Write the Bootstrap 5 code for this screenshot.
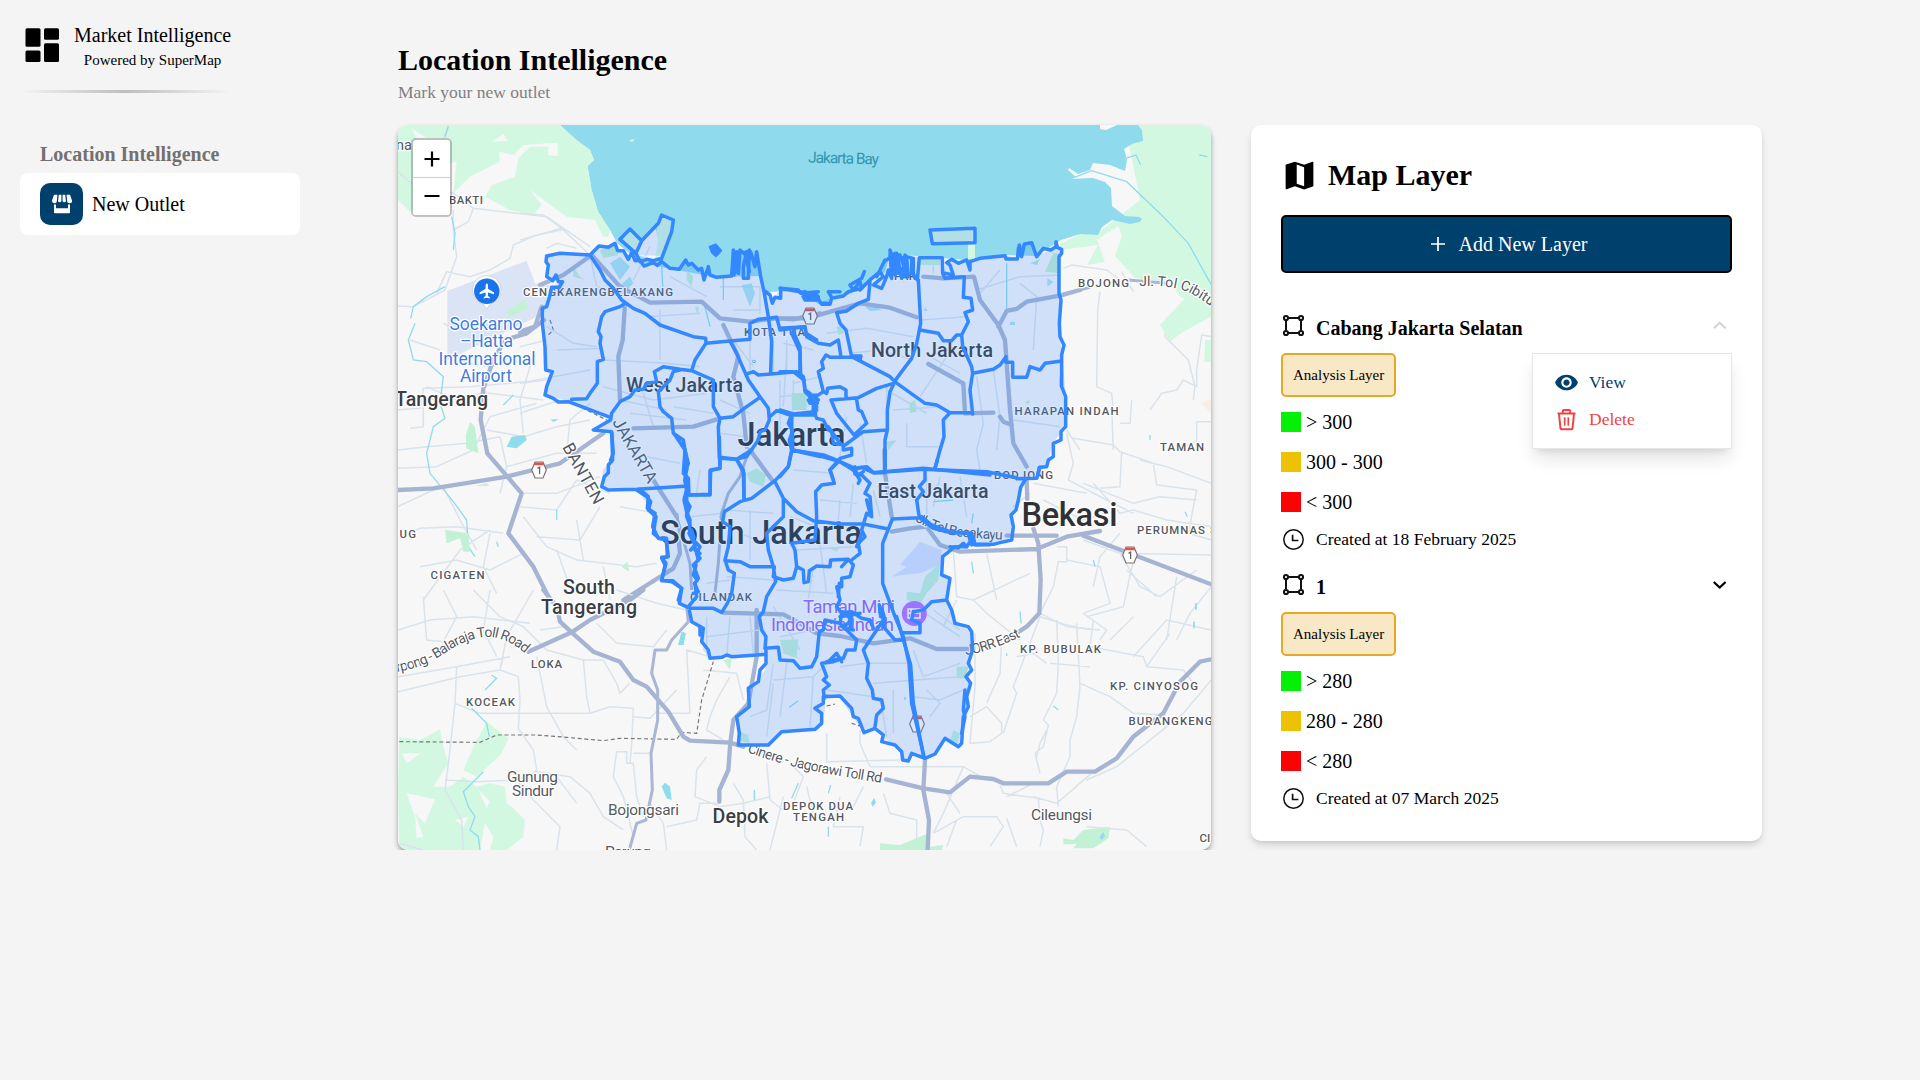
<!DOCTYPE html>
<html lang="en">
<head>
<meta charset="utf-8">
<meta name="viewport" content="width=device-width, initial-scale=1">
<title>Market Intelligence</title>
<link href="https://cdn.jsdelivr.net/npm/bootstrap@5.3.0/dist/css/bootstrap.min.css" rel="stylesheet">
<style>
  body { background: #f4f4f4; color: #000; font-family: "Liberation Serif", "Times New Roman", serif; font-size: 20px; line-height: 30px; overflow: hidden; }
  svg { display: block; flex: none; }
  .side { width: 320px; padding: 20px; flex: none; }
  .brand { gap: 9px; }
  .brand-sub { font-size: 15px; line-height: 20px; }
  .divider { width: 211px; height: 3px; margin-top: 20px; background: linear-gradient(90deg, transparent, #bdbdbd, transparent); }
  .side-title { color: #757070; font-weight: 700; margin: 46px 0 4px; padding-left: 20px; }
  .side-link { height: 62px; padding: 10px 20px; border-radius: 8px; color: #000; gap: 9px; }
  .side-icon { width: 43px; height: 42px; border-radius: 10px; background: #00406d; }
  .content { padding: 42px 0 0 78px; }
  .page-title { font-size: 30px; line-height: 36px; font-weight: 700; margin: 0 0 2px; }
  .page-sub { font-size: 17.5px; line-height: 25px; color: #808080; margin: 0 0 20px; }
  .panels { gap: 40px; }
  .map-box { width: 813px; height: 725px; border-radius: 10px; box-shadow: 0 5px 7px -1px rgba(0,0,0,.25), 0 2px 5px -1px rgba(0,0,0,.3); }
  .zoom-ctl { left: 13px; top: 13px; width: 41px; border: 2px solid rgba(0,0,0,.22); border-radius: 5px; background-clip: padding-box; }
  .zoom-ctl button { width: 37px; height: 37px; background: #fff; border: 0; padding: 0; }
  .zoom-ctl button + button { height: 38px; border-top: 1px solid #ccc; }
  .layer-card { width: 511px; border-radius: 10px; padding: 30px; box-shadow: 0 5px 8px -1px rgba(0,0,0,.13), 0 2px 5px -2px rgba(0,0,0,.13); }
  .layer-title { font-size: 30px; line-height: 40px; font-weight: 700; margin: 0 0 20px; gap: 10px; }
  .add-btn { height: 58px; background: #00406d; border: 2px solid #000; border-radius: 5px; color: #fff; font-size: 20px; margin-bottom: 40px; gap: 9px; padding: 0; }
  .add-btn:hover { background: #00406d; color: #fff; border-color: #000; }
  .layer-item + .layer-item { margin-top: 20px; }
  .layer-head { height: 30px; margin-bottom: 10px; gap: 10px; font-weight: 700; line-height: 31px; }
  .tag { display: inline-block; height: 44px; border: 2px solid #e6a926; border-radius: 5px; background: #f9e8c5; padding: 0 10px; font-size: 15px; line-height: 40px; vertical-align: top; }
  .legend { margin: 10px 0; gap: 10px; line-height: 31px; }
  .legend > div { gap: 5px; height: 30px; }
  .swatch { width: 20px; height: 20px; }
  .hi { background: #04f004; } .mid { background: #edc204; } .lo { background: #f80404; }
  .stamp { font-size: 17.5px; line-height: 25px; gap: 10px; }
  .menu-box { top: 40px; right: 0; width: 200px; height: 96px; padding: 16px 21px; background: #fff; border: 1px solid #e5e7eb; box-shadow: 0 12px 18px -3px rgba(0,0,0,.12), 0 5px 7px -4px rgba(0,0,0,.1); font-size: 17.5px; line-height: 25px; gap: 12px; }
  .menu-box a { gap: 10px; text-decoration: none; }
  .view { color: #00406d; } .del { color: #ef4444; }

  /* map symbols */
  #map text { font-family: Roboto, "Open Sans", sans-serif; fill: #55585e; stroke: #fff; stroke-width: 2.4px; stroke-linejoin: round; paint-order: stroke; }
  #map .dist { font-size: 11.4px; font-weight: 500; }
  #map .town { font-size: 15.5px; }
  #map .city { font-size: 19.6px; font-weight: 500; fill: #3c3e42; }
  #map .big { font-size: 32.5px; font-weight: 500; fill: #2f3135; }
  #map .rd { font-size: 14px; }
  #map .air { font-size: 17.5px; fill: #3f7ddb; }
  #map .poi { font-size: 18.5px; fill: #9a62f0; }
  .sea { fill: #90daee; } .park { fill: #d3f8e2; } .park2 { fill: #c3f1d5; } .pond { fill: #8fdcec; }
  .minor { fill: none; stroke: #d9e3ec; stroke-width: 4.5; stroke-linejoin: round; }
  .major { fill: none; stroke: #a5b4d3; stroke-width: 13; stroke-linejoin: round; stroke-linecap: round; }
  .mid-rd { fill: none; stroke: #a9b7d4; stroke-width: 9; stroke-linejoin: round; }
  .creek { fill: none; stroke: #8fdcec; stroke-width: 4; }
  .limit { fill: none; stroke: #777; stroke-width: 3.5; stroke-dasharray: 12 8; }
  .zone { fill: #3388ff; fill-opacity: .2; }
  .edge { fill: none; stroke: #3388ff; stroke-width: 10.5; stroke-linejoin: round; stroke-linecap: round; }
</style>
<script src="https://cdn.jsdelivr.net/npm/bootstrap@5.3.0/dist/js/bootstrap.bundle.min.js"></script>
</head>
<body>
<svg width="0" height="0" class="position-absolute">
  <defs>
    <symbol id="i-poly" viewBox="0 0 25 25"><g fill="none" stroke="#111" stroke-width="2"><path d="M7.5 5h10M7.5 20h10M5 7.5v10M20 7.5v10"/><circle cx="5" cy="5" r="2.1"/><circle cx="20" cy="5" r="2.1"/><circle cx="5" cy="20" r="2.1"/><circle cx="20" cy="20" r="2.1"/></g></symbol>
    <symbol id="i-clock" viewBox="0 0 25 25"><circle cx="12.5" cy="12.5" r="9.7" fill="none" stroke="#111" stroke-width="1.5"/><path d="M11.6 7.8v5.7h5.8" fill="none" stroke="#111" stroke-width="1.7"/></symbol>
    <symbol id="i-shield" viewBox="-8 -9 16 18"><path d="M-4 -8H4L7.3 0 4 8H-4L-7.3 0Z" fill="#fff" stroke="#80736f" stroke-width="1.2"/><path d="M-4 -7.4H4L5 -4.8H-5Z" fill="#e0524c"/><path d="M-1.5 -1.6 .6 -2.8V4" fill="none" stroke="#666" stroke-width="1.3"/></symbol>
  </defs>
</svg>

<div class="d-flex">
  <aside class="side">
    <div class="brand d-flex align-items-center">
      <svg width="45" height="45" viewBox="0 0 45 45"><g fill="#000"><rect x="5.5" y="5.2" width="15" height="18.6" rx="1.5"/><rect x="5.5" y="27.5" width="15" height="11.5" rx="1.5"/><rect x="24" y="5.2" width="15" height="11.5" rx="1.5"/><rect x="24" y="20.3" width="15" height="18.7" rx="1.5"/></g></svg>
      <div class="text-center"><div>Market Intelligence</div><div class="brand-sub">Powered by SuperMap</div></div>
    </div>
    <div class="divider"></div>
    <div class="side-title">Location Intelligence</div>
    <a class="side-link d-flex align-items-center bg-white text-decoration-none" href="#">
      <span class="side-icon d-flex align-items-center justify-content-center">
        <svg width="22" height="20" viewBox="0 0 22 20"><g fill="#fff"><path d="M3 .8H6.4L5.900 6.600a2.500 2.500 0 0 1-5 .2ZM7.800.8h2.600v6.500a1.900 1.900 0 0 1-3.400 0ZM11.600.8h2.600l.8 6.500a1.900 1.900 0 0 1-3.400 0ZM15.600.8H19l2.100 6a2.500 2.500 0 0 1-5 0Z"/><path d="M3 10.500h2v3.700h12v-3.700h2v7.800a1 1 0 0 1-1 1H4a1 1 0 0 1-1-1Z"/></g></svg>
      </span>
      <span>New Outlet</span>
    </a>
  </aside>

  <main class="content">
    <h1 class="page-title">Location Intelligence</h1>
    <p class="page-sub">Mark your new outlet</p>
    <div class="panels d-flex align-items-start">
      <section class="map-box position-relative overflow-hidden">
        <svg id="map" width="813" height="725" viewBox="398 125 813 725">
          <rect x="398" y="125" width="813" height="725" fill="#f7f7f7"/>
          <!-- sea and coast -->
          <path class="park" d="M1060 244L1080 234 1098 233 1112 222 1140 200 1125 125H1212V315L1210 318 1180 296 1170 282 1135 278 1115 256 1122 236 1118 226 1097 240 1105 262 1087 265 1098 245 1060 250Z"/>
          <path class="sea" d="M560 125L576 140 590 150 594 160 587.500 166 591.500 190 598 212 610 230 617 243 640 262 670 269 716 277 760 276 765 292 800 291 818 304 850 294 885 272 890 254 942 258 966 260 1005 255 1036 256 1061 240 1080 234 1098 235 1102 227 1112 220 1130 224 1140 222 1142 219 1139 217 1125 216 1112 206 1111 188 1105 182 1093 178 1071 179 1076 177 1068 170 1069 168 1078 174 1090 170 1093 163 1110 165 1125 171 1127 160 1124 149 1132 144 1143 141 1142 130 1138 125 1117 125 1106 130 1100 129 1100 125Z"/>
          <path class="park" d="M968 244h7v15h-7ZM629 140l6-1-3 3Z"/>
          <path fill="#d3f6e0" d="M620 238L630 229 641 241 635 254ZM657 222L662 215 673 221 664 256 655 258ZM930 229L974 228V242L931 244Z"/>
          <path fill="#f7f7f7" d="M637 255L641 241 655 226 658 240 655 260Z"/>
          <!-- north-west sheet -->
          <g transform="translate(390 30) scale(.33333)">
            <path class="park" d="M24 285H510L560 330 600 360 612 390 593 408 605 480 625 545 660 600 655 620 640 620 615 570 530 560 420 480 455 525 430 555 360 540 285 500 305 465 375 440 385 385 420 350 475 350 475 375 503 378 503 338 400 345 370 375 328 365 330 395 240 440 190 490 200 395 180 400V325H80L110 325 65 295 80 325V530L60 545 24 510Z"/>
            <path fill="#f7f7f7" d="M305 335L340 312 353 333Z"/>
            <path fill="#dbe4f5" d="M172 783L410 692 435 760 480 765 462 850 172 990Z"/>
            <path class="park2" d="M345 845L405 808 415 835 360 860Z"/>
            <path class="minor" d="M24 425L70 465 190 490 250 535 470 560 600 650M250 535L235 575 190 600M515 600L440 615 370 645 360 685 300 720 240 740 170 725 140 790M190 540V600L200 680 165 780 70 830 24 828M470 655L500 640 560 655M175 285L160 325"/>
            <path class="creek" d="M175 290L165 320M185 560L195 610 190 660M165 770L110 800 70 830 62 865"/>
          </g>
          <!-- north-east sheet -->
          <g transform="translate(800 110) scale(.33333)">
            <path class="creek" d="M815 205L875 182 980 215 1090 320 1165 400 1234 525M975 145L1008 135 1022 165M1198 135L1222 140"/>
            <path class="minor" d="M790 475L815 465 920 480 1000 540M900 545L893 600 890 830 935 850 940 900M1234 590L1150 590 1100 625 1095 680 1165 750 1185 830 1180 870M1234 680L1205 675 1190 780 1190 830 1150 810 1130 840 1085 850 1050 900M1000 545L965 485"/>
            <path class="park" d="M1080 645L1160 560 1230 590 1234 620 1150 665 1110 695ZM1215 690H1234V755H1213Z"/>
            <path class="mid-rd" d="M780 555L870 532M985 510L1100 520"/>
          </g>
          <!-- west sheet -->
          <g transform="translate(390 320) scale(.33333)">
            <path class="minor" d="M24 270L90 265 100 205 240 200 410 185 600 150M60 325L100 320V240L190 230 300 220 460 240M24 390L110 380 230 370 330 350M24 445L140 440 250 390 300 290 440 250M110 200L200 240 290 215M400 340L390 240 435 90M290 330L400 350 500 320 600 300M330 350L350 440 330 520M350 440L500 400 620 400M400 520L500 520 630 470M530 400L540 300 600 250M390 560L500 570 560 480 660 520M440 650L570 660 630 560M400 590L470 680 560 720 740 740 800 730M500 690L540 800M24 650L90 625 200 620 340 640M90 740L200 720 300 750 400 700M100 840L210 690 300 630M300 640L280 740 320 820M560 600L580 720M640 740L660 840M690 560L800 580M24 560L130 510M160 500L210 600 260 690"/>
            <path class="minor" stroke="#c2d2ea" d="M160 10L250 60 350 50M180 120L300 140 400 120M150 90L60 60"/>
            <path class="creek" d="M75 10L55 60 70 120 110 125 160 170 150 250 165 295 130 320 110 400 120 460 190 545 230 600 235 680 255 710M340 255L370 225M500 570V600M320 665L325 680"/>
            <path class="pond" d="M350 380L365 350 405 345 410 360 380 385ZM482 298H506L490 306Z"/>
            <path class="park2" d="M228 345L240 305 255 320 265 400 228 385ZM165 630L235 640 240 695 220 695 210 655 170 670ZM695 740L712 725 718 755ZM255 498L290 490 298 498Z"/>
            <path class="limit" d="M480 0L490 30 470 50M540 245L650 300"/>
            <path class="major" d="M24 510L130 505 350 470 510 430 640 340M280 205L272 300 292 400 395 520 355 640 430 740 480 840M282 200L310 120 345 60 410 40 462 0M700 840L850 745 870 700 865 650"/>
          </g>
          <!-- east sheet -->
          <g transform="translate(800 400) scale(.33333)">
            <path class="minor" d="M800 100L820 190 805 240 920 300 1000 340M820 115L940 135 960 155 1060 190M935 20L940 150M965 155L960 260 900 265M960 70L990 70 995 0M1060 190L1070 255 1190 270 1165 400 1234 420M1020 180L1100 200 1234 250M1190 135V65H1234M850 250L1000 310 1080 290 1190 300M880 250L960 340 1000 330 1100 360 1234 380M700 250L860 280M730 300L850 360 920 340M460 450L470 590 520 600 690 520M520 600L560 640 660 720M470 600L430 680M770 440H800V485H775L760 560 720 640 800 680 900 690M850 420L960 460 1234 465M800 480L900 500 930 610 850 640 920 690 900 720M960 460L1020 560 1080 590 1190 510M980 510L1070 590M1130 530L1100 720M1234 560L1170 640 1130 720M690 280L640 320M960 400L900 470 880 560M1000 480L970 620 860 650M560 460L590 600"/>
            <path class="creek" d="M515 485L520 520M660 635L663 670M1050 105V120M1155 335L1162 350M880 480L885 500M1188 610V630M1182 665V685"/>
            <path opacity=".5" fill="#f8e8d0" d="M1205 10L1225 0H1234V40Z"/>
            <path class="major" d="M275 395L330 385 380 380 420 435 480 455 710 447 800 410 900 393M620 407H770M850 407L1234 553M680 240L682 300M700 385L715 430 722 540 718 640 680 680 640 705"/>
          </g>
          <!-- south-west sheet -->
          <g transform="translate(390 590) scale(.33333)">
            <path class="park" d="M28 440L90 450 150 418 160 470 175 520 130 590 180 590 220 560 260 590 300 580 345 590 350 640 370 655 405 690 400 740 350 780H28L24 600ZM220 540L250 470 290 395 355 445 335 490 315 510 260 560Z"/>
            <path fill="#f7f7f7" d="M35 490H92L50 520ZM50 610L135 628 105 700 75 670 100 740 80 745 75 680ZM265 598L300 635 290 655ZM285 700L310 740 300 780H270ZM195 690L235 680 220 710Z"/>
            <path class="minor" d="M24 120L120 90 250 80 420 100M100 20L110 150 160 155 200 80 160 0M250 0L330 80 400 110 470 180 580 210 640 210M24 260L200 230 360 200M24 305L130 280 210 260 330 240 350 140 430 0M340 200L330 240 385 260 390 330 385 415 430 480 440 540 400 580M200 230L195 340 180 480 165 600 215 690 220 780M195 340L270 370 600 370 660 350 730 355M440 200L470 350 520 440 560 480M580 210L590 320 600 370M300 0L280 120 320 200M165 570L260 575 380 570 440 545 540 560 600 610 640 680 700 720M640 210L680 280 690 310 720 280M500 560L560 640M380 570L430 630 510 710 500 780M730 355L725 460 720 520M730 490H780M800 370L900 370 890 180 960 200M680 485H710V520H730L740 620 760 680M680 485L670 560 700 620 730 740M780 640L820 700 830 780M830 710L920 690 930 640 990 640M950 500L920 540 915 620 990 650 1060 640 1140 620M1030 580L1060 630 1065 740 1100 780M1130 520L1140 630 1180 660M960 380L950 420 1000 450M940 240L1040 250 1060 330M1020 260L980 330 960 380M450 120L520 110M620 100L680 160 790 170 830 120M680 0L800 40 890 60M24 760L100 780"/>
            <path class="minor" d="M730 380L780 385 860 300M1180 620L1160 700 1140 780M1200 520L1240 560 1210 640"/>
            <path class="creek" d="M285 300L320 265 305 255M245 355L290 400 298 440M280 545L220 605 235 650 255 680 240 720 265 740 270 780M1225 580L1205 625M1093 600V630"/>
            <path class="pond" d="M865 165L875 125 887 130 880 165ZM815 590L825 578 840 590 845 630 830 625Z"/>
            <path class="park2" d="M1000 210L1025 205 1020 240Z"/>
            <path class="limit" d="M28 455L270 457 320 435 440 435 530 442 640 452 690 445 860 448 875 427 920 430 935 330 970 215"/>
            <path class="major" d="M460 0L500 50 510 95 545 127 610 185 690 215 730 270 770 290 835 365 880 440 900 452 1020 458 1060 470M415 185L545 127 600 90 720 30 760 0M1020 470L1015 540 988 600 988 635M1100 60V200L1075 340 1030 390 1020 465"/>
            <path class="mid-rd" d="M890 50L895 95 845 150 830 180 795 180 785 250 803 300 803 390 783 490 787 600 768 690 740 700 718 780"/>
          </g>
          <!-- south-east sheet -->
          <g transform="translate(800 600) scale(.33333)">
            <path class="minor" d="M80 400V485L300 480M180 390V430L210 500 360 500 490 500 560 540M490 500L430 640 400 700M525 100V260L510 430 570 425 605 400V370L560 320 510 350M605 120L600 220 560 310M720 50L640 260 650 280 610 400M770 60L775 190 770 280 730 360M720 50L800 75 880 90M830 70L840 260 830 350 810 420V470L770 560 775 620M840 250L930 290 1000 340 1090 345M650 170L700 160 740 190M750 190L870 200M880 60L870 140 1030 170 1040 200 1150 210 1180 250M730 360L745 375 730 440 705 460 720 520M740 390L720 430 710 470M880 515L770 610 700 590M600 555L610 580 715 595 720 660 730 690 720 740M400 700L490 650 590 650 610 680 570 740M440 580L480 640M690 555L620 590M860 680L980 690 1040 740M1234 240L1150 340 950 500 860 540M1000 170L1100 60 1234 90M930 120L1000 50M250 580L270 640 350 660V720M120 590L100 680 190 680 180 740M190 560L160 620 120 640M20 560L40 640M470 660L440 740M1040 200L1110 100M620 655L650 740"/>
            <path class="creek" d="M92 555L85 580M85 680V710M760 318L775 330M1188 10V28M1182 65V85M620 160V168"/>
            <path class="pond" d="M213 610L222 593 228 608 218 620Z"/>
            <path class="park2" d="M240 730L300 735 380 702V750H240ZM388 740L430 735 425 750H388ZM790 715L820 720 850 690 930 680 925 715 880 745H820L830 732 790 733Z"/><path class="pond" d="M898 710L910 697 916 708 905 720Z"/>
            <path class="limit" stroke="#555" d="M75 285L130 290M80 318L105 312M155 370L180 378"/>
            <path class="major" d="M258 538L370 565 450 577 510 530 580 537 610 550 745 550 800 515 885 515 950 475 1000 410 1090 340 1140 245 1200 185 1234 178M375 480L370 570 387 660 383 750"/>
          </g>
          <!-- city interior -->
          <g transform="translate(520 200) scale(.33333)">
            <path class="minor" d="M80 380L160 430 230 440M110 450L250 445M420 330V480M250 480L440 490 540 500M250 560L400 600 560 580M370 580L400 680M460 620L580 640M640 420L700 500M690 400V510M760 400V520M800 420V520M640 330L720 330M650 450L640 560M330 640L500 660M300 600L440 630M380 350L540 340M600 260H720V340M0 40L70 45 125 85 210 165M125 85L0 120M210 165L230 260 300 280M340 240L390 140M450 230L560 290M600 600L690 640M600 700L750 720M0 440L80 420M0 550L80 540M780 540V740M820 540V740M0 640L120 600"/>
            <path class="pond" opacity=".7" d="M270 190L300 170 330 200 300 240ZM665 255L695 250 705 280 690 320ZM285 270L330 230 340 250 300 290Z"/>
            <path class="park2" d="M160 200L180 230 195 240 160 230ZM500 210L520 230 515 260 500 240ZM820 580H855V625H818ZM525 320L537 320 533 345ZM240 150L285 135 295 165 250 175Z"/>
            <path class="creek" d="M425 200L430 290M610 230V300M555 320L570 380"/>
            <path class="major" d="M60 255L130 225 215 165 300 260 390 308 545 305 600 355 690 365 770 355 820 358 900 340M315 310L308 420 295 470 300 600M340 685L520 680 600 655M0 395L45 380 65 320M610 375L655 470 640 530 670 640 680 740"/>
          </g>
          <g transform="translate(780 210) scale(.33333)">
            <path class="minor" d="M140 370L260 355 400 380M210 430L300 420 400 450M320 530V680M420 330L560 320M590 240L720 200 840 195M660 180L600 250M720 220L770 260 760 420M500 440L420 560M540 490L450 440M340 600L480 590M380 640V710H480M590 500L610 640 590 720 600 780M640 480L660 620 650 720M700 630L840 650M10 400L100 420M40 520L120 500M0 560L100 550M200 620L180 740M240 640L260 760M460 150V190M320 540L440 610M20 430L10 590M860 660L900 720"/>
            <path class="pond" opacity=".7" d="M255 290L285 285 303 300 270 303ZM750 160L780 148 770 165ZM802 205L820 215 802 230ZM690 335H705V345H690ZM435 290L443 303H432Z"/>
            <path class="park2" d="M388 580L405 570 410 605 390 610ZM320 695L350 690 325 720ZM170 350L185 345 190 370 175 375ZM35 550H80V600H35ZM735 575L750 570 745 585ZM820 130L837 130V190L795 185ZM415 150H480V165H415Z"/>
            <path class="creek" d="M680 160V300M840 500V530"/>
            <path class="major" d="M0 325L80 325 240 280 330 293 410 322M430 200L490 205 582 200 600 270 655 345 675 390 690 600 700 700 740 770M655 350L680 303 710 297 740 275 840 257 900 240M445 462L550 520 555 610 640 608M660 620L670 635 695 645"/>
          </g>
          <g transform="translate(640 450) scale(.33333)">
            <path class="minor" d="M20 20L120 40M150 200L250 190M180 60L170 130M260 180L400 190M300 250L380 280M330 180V330M260 380L400 390M200 400L270 390M200 500V620M270 500L260 620M330 500L340 610M200 560L360 540M460 60L580 70M540 150L650 160M450 200L530 230M470 300L640 290M410 420L580 430M520 350L500 480M400 470L480 600M420 560L520 540M400 640L380 780 330 800M400 690L520 680 560 640M400 700L380 860M440 640L420 800M520 680L510 830M600 650L680 640M560 720L700 740M640 500L740 520M680 640L800 640M700 700L960 680M820 600L850 680 960 640M820 740L900 750 970 720M860 720L900 760 870 800M720 740L740 860M760 720V850M840 480L960 560M880 480L960 540M700 120L720 200M820 150L900 100M860 80V200M900 80L880 170M960 80L980 200M600 150L590 270M640 100L630 200M540 280L560 430"/>
            <path fill="#dae2fa" d="M755 380L800 350 780 345 840 275 905 300 900 345 840 370 790 375Z"/>
            <path fill="#c4f1d8" d="M800 450V425L840 430 855 380 900 340 895 390 860 430 840 465ZM320 70L350 55 378 75 370 110 330 95ZM420 570L475 568 470 625 430 610ZM950 650H985V685H950ZM565 293L600 290 590 305ZM295 870L300 845 325 855 328 880ZM930 870L940 840 960 850 950 885Z"/>
            <path class="creek" d="M448 772L475 752M1000 190L995 220M795 740V750M880 155L940 150" stroke-width="7"/>
            <path class="pond" d="M115 585L125 545 137 550 130 585Z"/>
            <path class="major" d="M250 488L430 493 480 520 530 550 600 558 700 580 810 565 890 597 1000 597M733 0L735 70 755 200M330 0L400 95M40 90L110 200M250 180L245 200"/>
            <path class="mid-rd" d="M110 190L120 260M110 200L150 340 155 420M320 20L300 80 265 130 245 190 235 340 225 430"/>
          </g>

          <!-- labels -->
          <g>
            <text x="396" y="150" font-size="14.500">na</text>
            <text class="dist" x="449" y="204" textLength="34">BAKTI</text>
            <text class="dist" x="523" y="296.300" textLength="150">CENGKARENGBELAKANG</text>
            <text class="air" x="449.500" y="330" textLength="73">Soekarno</text>
            <text class="air" x="460" y="347" textLength="53">–Hatta</text>
            <text class="air" x="438.500" y="364.500" textLength="97">International</text>
            <text class="air" x="460" y="382" textLength="52">Airport</text>
            <text class="city" x="395" y="406" textLength="93" font-weight="400">Tangerang</text>
            <text class="dist" x="391" y="538" textLength="25">BUG</text>
            <text class="dist" x="430.500" y="579" textLength="54">CIGATEN</text>
            <text class="city" x="563" y="594" textLength="52">South</text>
            <text class="city" x="541" y="614" textLength="96">Tangerang</text>
            <text class="dist" x="531" y="668" textLength="31">LOKA</text>
            <text class="dist" x="466" y="706" textLength="49">KOCEAK</text>
            <text class="town" x="507" y="781.700" textLength="51">Gunung</text>
            <text class="town" x="512" y="796.300" textLength="42">Sindur</text>
            <text class="town" x="608" y="815.300" textLength="71">Bojongsari</text>
            <text class="city" x="712.500" y="822.700" textLength="56">Depok</text>
            <text class="town" x="605" y="857" textLength="46">Parung</text>
            <text class="dist" x="783" y="810" textLength="70">DEPOK DUA</text>
            <text class="dist" x="793" y="821.300" textLength="51">TENGAH</text>
            <text class="town" x="1031" y="820" textLength="61">Cileungsi</text>
            <text class="dist" x="1199.500" y="841.500">CI</text>
            <text class="dist" x="1128.500" y="725" textLength="84">BURANGKENG</text>
            <text class="dist" x="1110" y="690" textLength="88">KP. CINYOSOG</text>
            <text class="dist" x="1020" y="653" textLength="81">KP. BUBULAK</text>
            <text class="poi" x="803" y="613" textLength="92">Taman Mini</text>
            <text class="poi" x="771" y="631" textLength="123">Indonesia Indah</text>
            <text class="dist" x="690" y="601" textLength="62">CILANDAK</text>
            <text class="big" x="660" y="543.500" textLength="202">South Jakarta</text>
            <text class="big" x="737.500" y="446" textLength="108">Jakarta</text>
            <text class="city" x="626" y="391.700" textLength="117">West Jakarta</text>
            <text class="city" x="871" y="357" textLength="122">North Jakarta</text>
            <text class="city" x="877.500" y="497.700" textLength="111">East Jakarta</text>
            <text class="big" x="1021.500" y="526" textLength="96">Bekasi</text>
            <text class="dist" x="744" y="336.300" textLength="61">KOTA TUA</text>
            <text class="dist" x="894" y="280" textLength="22">PAR</text>
            <text class="dist" x="1014.500" y="415" textLength="104">HARAPAN INDAH</text>
            <text class="dist" x="994" y="479" textLength="59">BODJONG</text>
            <text class="dist" x="1160" y="451.300" textLength="44">TAMAN</text>
            <text class="dist" x="1137" y="534" textLength="68">PERUMNAS</text><text class="dist" x="1210" y="534">S</text>
            <text class="dist" x="1078" y="287.300" textLength="51">BOJONG</text>
            <text x="808" y="162.500" font-size="15.500" textLength="71" transform="rotate(1.500 808 162)" style="fill:#2f97aa;stroke:none">Jakarta Bay</text>
            <path id="p1" fill="none" d="M397 672Q425 667 445 653 470 636 492 637 512 640 530 658"/>
            <text class="rd"><textPath href="#p1" textLength="140">rpong - Balaraja Toll Road</textPath></text>
            <path id="p2" fill="none" d="M747 752Q790 768 840 776L888 784"/>
            <text class="rd"><textPath href="#p2" textLength="138">Cinere - Jagorawi Toll Rd</textPath></text>
            <path id="p3" fill="none" d="M966 655Q990 652 1024 635"/>
            <text class="rd"><textPath href="#p3" textLength="58">JORR East</textPath></text>
            <path id="p4" fill="none" d="M1139 286Q1175 285 1190 293 1205 300 1235 326"/>
            <text class="rd"><textPath href="#p4">Jl. Tol Cibitung</textPath></text>
            <path id="p5" fill="none" d="M915 521Q940 535 965 537 985 539 1012 540"/>
            <text class="rd"><textPath href="#p5" textLength="91">Jl. Tol Becakayu</textPath></text>
            <text x="612" y="422" font-size="17" textLength="72" transform="rotate(60 612 422)">JAKARTA</text>
            <text x="562" y="447" font-size="17" textLength="67" transform="rotate(61 562 447)">BANTEN</text>
          </g>
          <use href="#i-shield" x="531" y="461" width="16" height="18"/>
          <use href="#i-shield" x="802" y="307" width="16" height="18"/>
          <use href="#i-shield" x="1122" y="546" width="16" height="18"/>
          <use href="#i-shield" x="909" y="715" width="16" height="18"/>
          <path d="M486.800 309.500Q485 304 479.500 302A14.200 14.200 0 1 1 494 302Q488.500 304 486.800 309.500Z" fill="#fff" stroke="#ccd" stroke-width=".8"/>
          <circle cx="486.800" cy="291.300" r="12.700" fill="#1a73e8"/>
          <path fill="#fff" d="M486.800 283.500q1.200 0 1.200 2v3.300l6 3.700v1.700l-6-1.800v3.600l1.800 1.300v1.300l-3-.8-3 .8v-1.300l1.800-1.300v-3.600l-6 1.800v-1.700l6-3.700v-3.300q0-2 1.200-2Z"/>
          <circle cx="914.300" cy="613.500" r="12.500" fill="#b86eff"/>
          <path d="M908 609h12v9h-12zM911 609v9M908 613h12" stroke="#fff" stroke-width="1.500" fill="none"/>

          <!-- administrative area -->
          <path class="zone" d="M546.700 255L560 253.500 590 255 598 247 615 243 620 252 635 260 643 264 661.500 261 670 268.500 680 269 685.500 262 693 266.500 703 271.500 716.500 277 731.500 276 733 250 751.500 250 757 252 763.500 290 772 301.500 781.500 288 798 290 818 293 821.500 301.500 846.500 293 860 285 880 273 890 253.500 913 256.500 942 257.500 942 275 946.500 261.500 966.500 260 980 258 1005 255.500 1018 258 1020 245 1030 242.500 1036.500 256.500 1056.500 246.500 1061.500 251.500 1059 296.500 1060 336.500 1063 363 1065.500 393 1065 426.500 1053 443 1046.500 466.500 1038 473 1023 480 1016.500 510 1011 515 1011 540 993 544.500 973 543 950 546.500 941 556.500 942 573 949 576.500 948 600 953 618 966.500 628 972 636.500 972.500 655 966.500 673 970 686.500 966.500 710 961.500 733 959 746.500 945 738 933 754 925 758 911.500 754 908 761.500 901.500 760 901.500 750 881.500 736.500 878 726.500 863 731.500 850 713 840 698 825 695 825 710 821.500 723 815 730 783 731.500 768 745 738 745.500 736.500 716.500 750 706.500 750 690 765 670 766.500 655 730 656.500 711.500 659 703 650 703 633 691.500 620 690 610 678 603 680 586.500 661.500 580 666.500 558 667 540 655 533 653 513 638 490.500 610 489 601.500 486.500 603 470 612.500 460 611.500 431.500 595 429 608 418 570 401.500 545 395 551 371.500 545 370 544 320 542 310 551.500 288 561.500 281.500 548 278ZM620 238L630 229 641 241 635 254ZM637 255L641 241 658 222 662 215 673 221 664 256ZM930 229L974 228V242L931 244Z"/>

          <g class="edge" transform="translate(520 200) scale(.33333)">
            <path d="M80 168L120 160 210 165 237 138 265 142 285 130 293 152 310 152 325 178 335 158 345 182 360 180 372 198 400 188 412 196 425 185 450 205 478 208 497 180 505 195 515 190 535 210 545 205 552 240 565 200 570 225 590 232 635 228 640 150 642 225 650 155 655 220 660 150 672 160 680 155 670 200V235L685 235 688 150 695 165 705 200 710 155 722 230 733 280 745 350M733 272L750 285 757 310 765 292 782 295V265L835 270 842 280 895 275M850 290H895V300H855ZM80 168L78 185 85 195 80 230 98 242 108 225 115 245 128 245 118 262 95 262 90 285 80 320 67 325V370L75 440 77 510 97 515 80 560 75 585 100 595 115 606 145 605 265 650M155 598L200 596 210 580 232 550V485L250 478 240 430 243 410 235 395 245 350 255 335 300 320 315 310M212 168L240 210 255 240 280 265 305 300 340 325 375 340 420 375 520 410 557 415 558 430 630 423 690 418V370L715 358 770 352 780 390 855 380 858 400 890 420M558 430L525 480 515 512M630 423L650 460 685 540 720 590 745 625 748 660 735 690 720 695 715 720 680 770 660 775M745 350L755 425 752 515M820 395L840 440V525M685 520L700 515 715 525 830 515 850 530 855 570 870 580 880 605 890 620 885 645 810 645 770 632 752 648M515 512L580 540V620L600 655 595 680 598 775M515 512L480 508 430 500 403 515 410 545 380 550 370 568 345 570 330 590 300 605 275 640 272 660 220 690 275 695 280 760 272 780M480 510L460 515 450 540 415 575 420 620 430 635 455 655 460 700 490 720 500 780M600 655L640 650 680 620 720 592M815 645V700L808 720 815 750 900 770M300 118L330 87 365 122 348 160ZM348 160L365 122 415 70 425 45 460 60 455 95 425 175 400 182 380 178 360 185Z"/>
            <path d="M645 158H655V215H645ZM578 140H590V158ZM675 160L688 215M880 585V630M870 590L895 600"/><path fill="#3388ff" stroke-width="4" d="M568 140L587 132 605 152 588 170 575 158Z"/><circle cx="702" cy="484" r="1" stroke-width="8"/>
          </g>
          <g class="edge" transform="translate(780 210) scale(.33333)">
            <path d="M0 235L60 245 110 255 115 268 70 260 75 245M115 268L125 283H150L155 265 190 258 205 245 245 235 240 215 220 240 210 225 245 205 253 185M155 262L145 245 180 245M240 240L275 205 300 185 310 200 280 225 305 235 320 200 325 180 335 205 330 120 345 160 350 130 365 205 375 135 385 200 380 140 400 145V195L412 210 418 143H487L488 190 495 205 553 200 550 262 573 265 578 300 555 308 565 335 545 375 530 375 515 392H490L475 370 420 360M495 190L520 195 510 165 500 158 515 148 535 160 560 150 570 180V155L600 145 675 137 678 147 712 147 718 105 725 140 733 102 755 98 770 140 790 115 812 120 828 110V95L832 112 845 118 845 130 837 140V250L843 270 838 340 840 380 852 405 845 435V530L857 560 857 650 843 665V690L820 700 820 740 805 750 800 770 778 772 775 795M330 135L345 195M345 135L350 190M360 135L380 195M395 145V190M320 150L345 130 370 145M290 200L315 150M270 215L265 268 235 280 200 303 170 308 180 340 198 360 215 440M415 210L422 340 410 400 395 445 350 505 330 545 322 600 322 660 315 690V780M545 375L548 410 575 470 578 490 570 540 578 612M578 490L640 478 660 465 678 440V457H698V502H740L750 470 780 480 795 460 845 453M215 440L330 500 348 518M215 438H243L240 450M215 442H150L138 435 125 455 130 475 115 485 130 545 140 550 143 535 180 530 198 540V560M130 545L100 565 108 580 100 600 110 625 130 630 145 660 155 665 160 700 190 705 190 720 215 715V735L180 745 150 780 160 810M153 570L235 563 290 535 348 518 435 580 470 585 510 608H578M153 570L170 610 222 675 260 640 245 605 235 600 230 570M510 608L490 630 492 680 480 720 465 775M195 705L250 665 320 660M0 600L40 612 105 605M35 612L25 640 37 660 38 710 25 770 0 800M38 720L110 735 180 755 225 775 260 770 280 788 430 778 620 785 710 803M0 355L75 350 80 380 115 400 150 405 175 390 183 440M35 370L60 425 62 495M0 485L40 485 72 510 75 545 100 570M220 775L235 795 250 785"/>
            <path d="M85 570L108 555 112 580 90 580ZM450 60L585 55V98L457 101ZM130 280H148M90 560L110 600M335 150L350 180M355 145V190M372 145V200M715 115V138M145 650L180 700"/>
          </g>
          <g class="edge" transform="translate(800 400) scale(.33333)">
            <path d="M650 236L710 235 717 208M675 240L662 262 655 300 648 330 633 345 640 380 635 420 600 428 580 433 520 433 510 400 450 395 395 375 365 350M515 400V435M500 440L490 430 475 443 450 440"/>
          </g>
          <g class="edge" transform="translate(390 320) scale(.33333)">
            <path d="M665 338L668 420 655 435V458L643 470 635 500 655 510 740 508 895 498M740 510L770 530 782 545 775 570 798 590 790 640 808 655 830 655 832 710 815 712 828 730 815 780 845 785 875 805 865 840M855 345L885 390 880 460 895 475 897 525 960 523 962 450 990 445 988 350M990 412L1040 418 1062 460V535"/>
          </g>
          <g class="edge" transform="translate(640 450) scale(.33333)">
            <path d="M135 0L145 40 135 65 142 110 132 150 140 185 150 210 148 240 160 270 180 290 170 310 180 325 160 345 175 385 165 400 170 440 145 470 150 490 155 515 190 535 185 575 205 600 210 625 245 622 260 615 275 620 375 613M210 135L210 62 240 55V25M145 135H210M240 25L290 28 310 60 312 150M0 118L25 140 22 175 45 190 38 230 55 265 78 270 85 320 65 325 75 345 65 392H98L125 415 118 460 150 475 220 475 245 487 262 460 275 430 283 370 265 360 255 330 265 290 270 230 248 215 253 185 300 155 335 145 405 92 445 50 455 0M290 28L335 0M455 0L550 15 595 32 640 60 665 52 700 68 850 55 1050 75M595 35L570 60 583 100 545 105 527 125 530 200 525 270 455 280 465 300 470 350 460 385 430 390 400 380 403 350 330 350 300 335 255 332M405 95L430 145 430 200 380 250 385 300 400 350 407 395 380 440 370 485 358 500 365 540 378 560 375 595 415 592 420 630 460 632 480 655 515 650 530 620 538 545 550 540 555 510 600 520M378 595V640L360 660 355 695 325 715 328 770 290 800 298 850 295 885 385 885 425 845 525 838 545 820V790L525 775 550 760 550 740 600 738 635 775 640 800 655 805 672 848 705 835 730 855 725 875 765 885 785 905 788 930 805 933 815 910 855 925 885 912 915 865 955 890 965 880 970 800 985 770 980 740 992 700 978 680 995 660 985 640 998 600 995 545 985 530 945 520 935 480 920 450 930 385 905 375 908 320 945 290 980 290 1000 260 1005 285 1050 284M405 95L430 145 470 185 520 212 600 222 670 222 745 237M470 350L490 360 492 398 505 395 508 362 530 348 570 350 572 330 625 328 640 345 630 380 605 385 605 410 590 410 600 450 590 470 605 490 635 485 665 505 690 510 700 535M625 328L605 350M635 330L660 310 655 280 675 260 665 240 680 190 695 200 690 140 675 130 690 100 665 75 645 72 645 50M605 490L600 520 625 545 650 570 645 600 620 600 610 625 580 635 545 640 560 680 550 690 568 705 550 720 553 745M735 0V68L700 68M855 60V90L838 110 850 125 830 150 838 203 757 207 728 280V400L765 500 790 560 807 640 815 760 852 920M838 203L880 235 930 248 985 250 990 270M720 470L730 510 690 570 670 600 685 640 680 685 697 720 700 745 725 750 730 775 710 795 705 830M725 475L735 510 730 530 765 570H790M790 548H840V520L815 510 820 485 850 480 875 455 920 450M885 55L892 30M570 630L590 610 605 635"/>
            <path d="M605 485L640 490 625 520 605 530 640 540M600 500L660 490M718 465L722 500M140 100V200L150 225M165 290L175 330M560 635L605 625"/>
          </g>
          <!-- jagged inner borders -->
          <g class="edge" stroke-width="13" transform="translate(640 450) scale(.33333)">
            <path d="M137 30L141 55 134 90 140 120M138 150L150 170 142 190M155 240L162 262M165 300L180 310M164 400L172 420M640 60L660 90 655 100M680 150L690 190M665 250L650 290M598 400L595 440M615 490L635 510 630 535M725 480L730 505M180 530V555M975 720L970 780 975 800 965 850M147 250L165 285 152 300M168 345L160 375 172 390M160 430L175 425M770 500L812 645 820 760 850 915"/>
          </g>
        </svg>
        <div class="zoom-ctl position-absolute overflow-hidden">
          <button class="d-flex align-items-center justify-content-center" aria-label="Zoom in"><svg width="16" height="16" viewBox="0 0 16 16"><path d="M0.500 8H15.500M8 .5V15.500" stroke="#000" stroke-width="2.200"/></svg></button>
          <button class="d-flex align-items-center justify-content-center" aria-label="Zoom out"><svg width="16" height="16" viewBox="0 0 16 16"><path d="M0.500 7H15.500" stroke="#000" stroke-width="2.200"/></svg></button>
        </div>
      </section>

      <section class="layer-card bg-white">
        <h2 class="layer-title d-flex align-items-center">
          <svg width="37" height="37" viewBox="0 0 24 24"><path d="M20.500 3l-.16.030L15 5.100 9 3 3.360 4.900c-.21.070-.36.250-.36.480V20.500c0 .28.220.5.500.5l.16-.030L9 18.900l6 2.100 5.640-1.900c.21-.070.360-.25.360-.48V3.500c0-.28-.22-.5-.5-.5zM15 19l-4.800-1.680V4.900L15 6.600V19z"/></svg>
          <span>Map Layer</span>
        </h2>
        <button class="btn add-btn w-100 d-flex align-items-center justify-content-center">
          <svg width="24" height="24" viewBox="0 0 24 24"><path d="M5 12H19M12 5V19" stroke="#fff" stroke-width="1.700"/></svg>
          <span>Add New Layer</span>
        </button>

        <div class="layer-item position-relative">
          <div class="layer-head d-flex align-items-start">
            <svg width="25" height="25"><use href="#i-poly"/></svg><span>Cabang Jakarta Selatan</span>
            <svg class="ms-auto" width="25" height="25" viewBox="0 0 25 25"><path d="M6.800 15.300L12.700 9.700 18.600 15.300" fill="none" stroke="#d3d3d3" stroke-width="2"/></svg>
          </div>
          <span class="tag">Analysis Layer</span>
          <div class="legend d-flex flex-column">
            <div class="d-flex align-items-center"><span class="swatch hi"></span>&gt; 300</div>
            <div class="d-flex align-items-center"><span class="swatch mid"></span>300 - 300</div>
            <div class="d-flex align-items-center"><span class="swatch lo"></span>&lt; 300</div>
          </div>
          <div class="stamp d-flex align-items-center"><svg width="25" height="25"><use href="#i-clock"/></svg>Created at 18 February 2025</div>
          <div class="menu-box position-absolute d-flex flex-column">
            <a href="#" class="view d-flex align-items-center"><svg width="25" height="25" viewBox="0 0 24 24"><path fill="currentColor" d="M12 4.500C7 4.500 2.730 7.610 1 12c1.730 4.390 6 7.500 11 7.500s9.270-3.110 11-7.500c-1.730-4.390-6-7.500-11-7.500zM12 17c-2.760 0-5-2.240-5-5s2.240-5 5-5 5 2.240 5 5-2.240 5-5 5zm0-8c-1.660 0-3 1.340-3 3s1.340 3 3 3 3-1.340 3-3-1.340-3-3-3z"/></svg>View</a>
            <a href="#" class="del d-flex align-items-center"><svg width="25" height="25" viewBox="0 0 25 25"><g fill="none" stroke="currentColor" stroke-width="2"><path d="M3.500 6.500H21.500M5 7L6.500 21.500Q6.700 22.300 7.500 22.300H17.500Q18.300 22.300 18.500 21.500L20 7M8.800 6.500V4Q8.800 3 9.800 3H15.200Q16.200 3 16.200 4V6.500"/><path d="M10.700 10.300V18.800M14.300 10.300V18.800" stroke-width="1.700"/></g></svg>Delete</a>
          </div>
        </div>

        <div class="layer-item">
          <div class="layer-head d-flex align-items-start">
            <svg width="25" height="25"><use href="#i-poly"/></svg><span>1</span>
            <svg class="ms-auto" width="25" height="25" viewBox="0 0 25 25"><path d="M6.800 10L12.700 15.600 18.600 10" fill="none" stroke="#000" stroke-width="2.200"/></svg>
          </div>
          <span class="tag">Analysis Layer</span>
          <div class="legend d-flex flex-column">
            <div class="d-flex align-items-center"><span class="swatch hi"></span>&gt; 280</div>
            <div class="d-flex align-items-center"><span class="swatch mid"></span>280 - 280</div>
            <div class="d-flex align-items-center"><span class="swatch lo"></span>&lt; 280</div>
          </div>
          <div class="stamp d-flex align-items-center"><svg width="25" height="25"><use href="#i-clock"/></svg>Created at 07 March 2025</div>
        </div>
      </section>
    </div>
  </main>
</div>
</body>
</html>
